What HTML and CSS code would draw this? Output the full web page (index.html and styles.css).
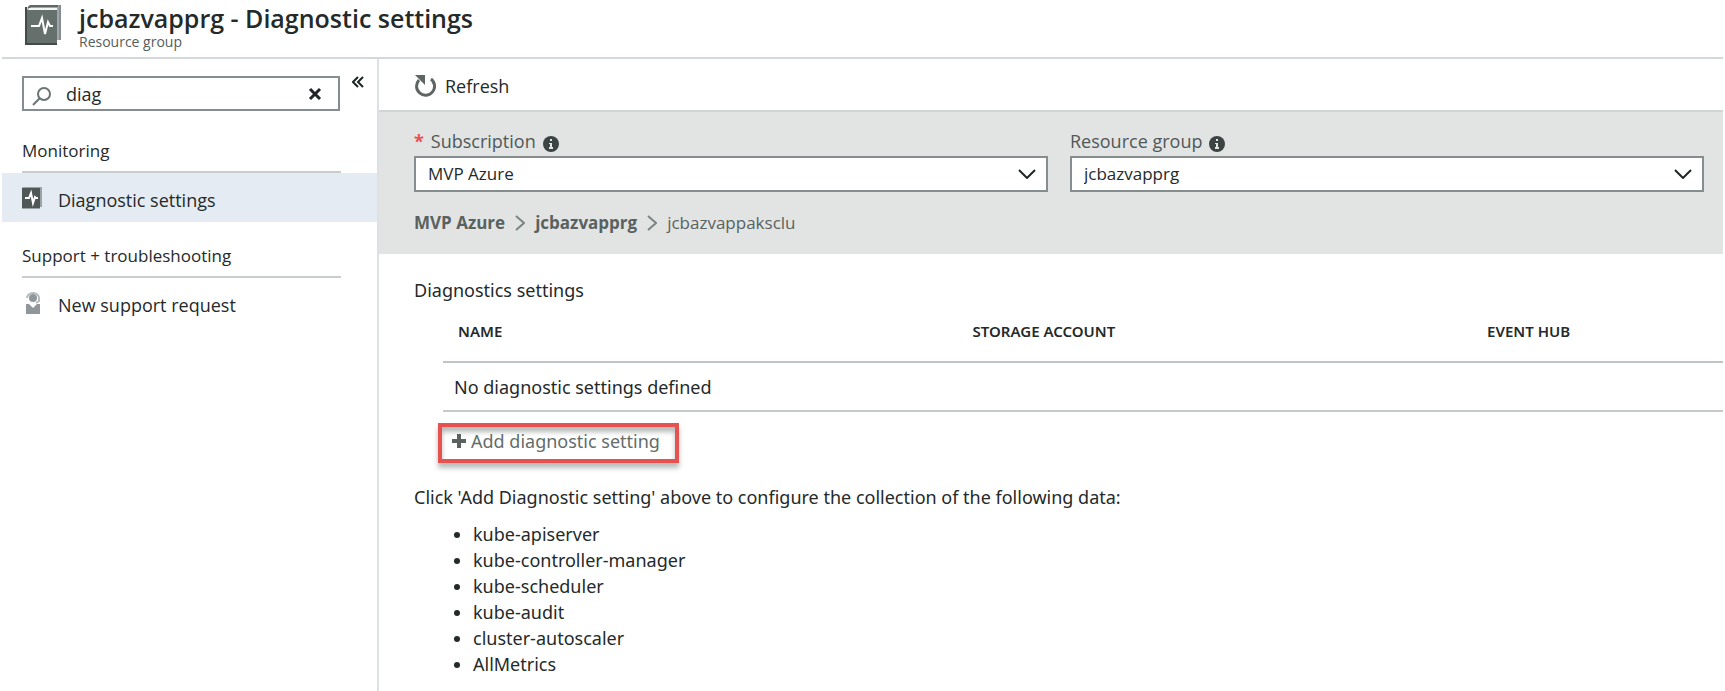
FILE: index.html
```html
<!DOCTYPE html>
<html lang="en">
<head>
<meta charset="utf-8">
<title>jcbazvapprg - Diagnostic settings</title>
<link rel="stylesheet" href="styles.css">
</head>
<body>
<header class="header">
  <svg class="header-icon" viewBox="0 0 38 42" aria-hidden="true">
    <path d="M4 1h32v35h-4V6H2z" fill="#a0a6a9"/>
    <path d="M3 4 6 2h27" fill="none" stroke="#5f6866" stroke-width="2"/>
    <path d="M4 4h28v2H3z" fill="#f4f6f6"/>
    <path d="M35 1v35" stroke="#858d90" stroke-width="2"/>
    <path d="M1 5v36h31V6H3z" fill="#65706d"/>
    <path d="M1 3v37h31" fill="none" stroke="#424b49" stroke-width="2"/>
    <path d="M6 22h8l3-8 3 16 3-12 2 4h3" fill="none" stroke="#fff" stroke-width="2"/>
  </svg>
  <div>
    <h1 class="title">jcbazvapprg - Diagnostic settings</h1>
    <p class="subtitle">Resource group</p>
  </div>
</header>
<div class="layout">
  <aside class="sidebar">
    <div class="search-row">
      <div class="search">
        <svg class="search-icon" viewBox="0 0 20 20" aria-hidden="true"><circle cx="12" cy="8" r="6" fill="none" stroke="#6b7375" stroke-width="2"/><path d="m8 12-7 7" stroke="#6b7375" stroke-width="2"/></svg>
        <input class="search-input" type="text" value="diag" aria-label="Search">
        <button class="clear" type="button" aria-label="Clear"><svg viewBox="0 0 14 14"><path d="m2 2 10 10M12 2 2 12" stroke="#1f2525" stroke-width="3"/></svg></button>
      </div>
      <button class="collapse" type="button" aria-label="Collapse menu"><svg viewBox="0 0 12 12"><path d="M6 1 1 6l5 5M11 1 6 6l5 5" fill="none" stroke="#1f2525" stroke-width="2"/></svg></button>
    </div>
    <nav>
      <h2 class="group">Monitoring</h2>
      <a class="item selected" href="#">
        <svg class="item-icon" viewBox="0 0 20 22" aria-hidden="true"><path d="M1 0h19v20h-2v2H0V1z" fill="#9ba3a5"/><path d="M0 1h18v20H0z" fill="#4e5856"/><path d="M3 11h4l2-5 2 10 2-6 1 1h2" fill="none" stroke="#fff" stroke-width="2"/></svg>
        Diagnostic settings
      </a>
      <h2 class="group">Support + troubleshooting</h2>
      <a class="item" href="#">
        <svg class="item-icon" viewBox="0 0 20 22" aria-hidden="true"><circle cx="11" cy="6" r="4" fill="#8f979a"/><path d="M5 6a6 5 0 0 1 12 0v3l-3 2" fill="none" stroke="#b4babc" stroke-width="2"/><path d="M4 12h3l4 4 4-4h3v10H4z" fill="#8f979a"/></svg>
        New support request
      </a>
    </nav>
  </aside>
  <main class="main">
    <div class="toolbar">
      <button class="refresh" type="button">
        <svg class="refresh-icon" viewBox="0 0 22 24" aria-hidden="true"><path d="M17 5a9 9 0 1 1-12 1" fill="none" stroke="#5d6664" stroke-width="3"/><path d="M1 1h10v10z" fill="#5d6664"/></svg>
        Refresh
      </button>
    </div>
    <section class="filters">
      <div class="fields">
        <div class="field">
          <label class="label" for="subscription"><span class="required">*</span>Subscription
            <svg class="info" viewBox="0 0 16 16" aria-hidden="true"><circle cx="8" cy="8" r="8" fill="#3c4443"/><path d="M7 3h2v2H7zM6 7h3v4h1v2H6v-2h1V8H6z" fill="#e2e4e4"/></svg>
          </label>
          <div class="select-box">
            <select class="select" id="subscription"><option>MVP Azure</option></select>
            <svg class="chevron" viewBox="0 0 18 10" aria-hidden="true"><path d="m1 1 8 8 8-8" fill="none" stroke="#1f2525" stroke-width="2"/></svg>
          </div>
        </div>
        <div class="field">
          <label class="label" for="group">Resource group
            <svg class="info" viewBox="0 0 16 16" aria-hidden="true"><circle cx="8" cy="8" r="8" fill="#3c4443"/><path d="M7 3h2v2H7zM6 7h3v4h1v2H6v-2h1V8H6z" fill="#e2e4e4"/></svg>
          </label>
          <div class="select-box">
            <select class="select" id="group"><option>jcbazvapprg</option></select>
            <svg class="chevron" viewBox="0 0 18 10" aria-hidden="true"><path d="m1 1 8 8 8-8" fill="none" stroke="#1f2525" stroke-width="2"/></svg>
          </div>
        </div>
      </div>
      <nav class="crumbs" aria-label="Breadcrumb">
        <a class="crumb" href="#">MVP Azure</a>
        <svg class="crumb-sep" viewBox="0 0 10 16" aria-hidden="true"><path d="m1 1 8 7-8 7" fill="none" stroke="#7b8484" stroke-width="2"/></svg>
        <a class="crumb" href="#">jcbazvapprg</a>
        <svg class="crumb-sep" viewBox="0 0 10 16" aria-hidden="true"><path d="m1 1 8 7-8 7" fill="none" stroke="#7b8484" stroke-width="2"/></svg>
        <span>jcbazvappaksclu</span>
      </nav>
    </section>
    <section class="content">
      <h2 class="section-title">Diagnostics settings</h2>
      <table class="table">
        <thead><tr><th>NAME</th><th>STORAGE ACCOUNT</th><th class="last">EVENT HUB</th></tr></thead>
        <tbody><tr><td colspan="3">No diagnostic settings defined</td></tr></tbody>
      </table>
      <button class="add" type="button">
        <svg class="plus" viewBox="0 0 14 14" aria-hidden="true"><path d="M7 0v14M0 7h14" stroke="#59625f" stroke-width="4"/></svg>
        Add diagnostic setting
      </button>
      <p class="hint">Click 'Add Diagnostic setting' above to configure the collection of the following data:</p>
      <ul class="list">
        <li>kube-apiserver</li>
        <li>kube-controller-manager</li>
        <li>kube-scheduler</li>
        <li>kube-audit</li>
        <li>cluster-autoscaler</li>
        <li>AllMetrics</li>
      </ul>
    </section>
  </main>
</div>
</body>
</html>
```
FILE: styles.css
```css
* { box-sizing: border-box; }
body {
  margin: 0;
  padding: 0 2px;
  min-height: 100vh;
  display: flex;
  flex-direction: column;
  background: #fff;
  color: #242a2a;
  font: 18px/26px "Open Sans", "Noto Sans", sans-serif;
}
h1, h2, p, ul { margin: 0; padding: 0; font-weight: 400; }
button, input, select { font: inherit; color: inherit; margin: 0; border: 0; padding: 0; background: none; }
a { color: inherit; text-decoration: none; }
svg { display: block; flex: none; }

.header { display: flex; gap: 16px; height: 59px; padding: 4px 23px 0; border-bottom: 2px solid #d3d8da; }
.header-icon { width: 38px; height: 42px; }
.title { font-size: 25px; line-height: 28px; font-weight: 600; }
.subtitle { font-size: 14px; line-height: 20px; color: #555d5d; }

.layout { display: flex; flex: 1; }
.sidebar { width: 377px; flex: none; border-right: 2px solid #dde1e4; }
.search-row { display: flex; gap: 12px; padding: 17px 0 0 20px; }
.search { display: flex; align-items: center; width: 318px; height: 35px; padding: 0 16px 0 8px; border: 2px solid #858d90; }
.search-icon { width: 20px; height: 20px; margin-top: 4px; }
.search-input { flex: 1; min-width: 0; height: 26px; padding-left: 14px; outline: 0; }
.clear { width: 14px; }
.collapse { align-self: flex-start; width: 12px; }
.group { margin: 27px 36px 0 20px; height: 35px; border-bottom: 2px solid #c9cdce; font-size: 17px; font-weight: 500; }
.item { display: flex; align-items: flex-start; gap: 16px; height: 49px; padding: 14px 0 0 20px; }
.item-icon { width: 20px; height: 22px; }
.selected { background: #e5ebf2; }
.item + .group { margin-top: 21px; }

.main { flex: 1; min-width: 0; }
.toolbar { height: 51px; padding: 14px 35px; }
.refresh { display: flex; align-items: center; gap: 9px; }
.refresh-icon { width: 22px; height: 24px; }
.filters { padding: 16px 19px 18px 35px; border-top: 2px solid #d2d5d5; background: #e2e4e4; }
.fields { display: grid; grid-template-columns: 1fr 1fr; gap: 22px; }
.label { display: flex; align-items: center; gap: 7px; height: 28px; padding-bottom: 2px; color: #4f5858; }
.required { color: #e8504c; font-weight: 700; }
.info { width: 16px; height: 16px; margin-top: 6px; }
.select-box { display: grid; align-items: center; }
.select { grid-area: 1 / 1; width: 100%; height: 36px; padding: 0 44px 0 12px; appearance: none; border: 2px solid #858d8f; background: #fff; font-size: 17px; }
.chevron { grid-area: 1 / 1; justify-self: end; width: 18px; height: 10px; margin-right: 12px; pointer-events: none; }
.crumbs { display: flex; align-items: center; gap: 10px; margin-top: 18px; color: #59625f; font-size: 17px; }
.crumb { font-weight: 700; }
.crumb-sep { width: 10px; height: 16px; }

.content { padding: 23px 0 0 35px; font-family: "Noto Sans", "Open Sans", sans-serif; }
.section-title { font-size: 18px; }
.table { width: calc(100% - 29px); margin-left: 29px; border-collapse: collapse; table-layout: fixed; }
.table th { width: 40.2%; height: 59px; padding: 0 15px 3px; text-align: left; font-size: 15px; font-weight: 600; border-bottom: 2px solid #bfc4c6; }
.table .last { width: 19.6%; }
.table td { height: 49px; padding: 0 11px; border-bottom: 2px solid #c5c9ca; }
.add { display: flex; align-items: center; gap: 5px; height: 40px; margin: 11px 0 0 24px; padding: 0 15px 4px 10px; border: 4px solid #e5524f; color: #636c6a; box-shadow: 0 5px 5px #b9bcbc, inset 0 5px 5px #b9bcbc; }
.plus { width: 14px; height: 14px; }
.hint { margin-top: 21px; }
.list { margin-top: 11px; padding-left: 59px; }
```
